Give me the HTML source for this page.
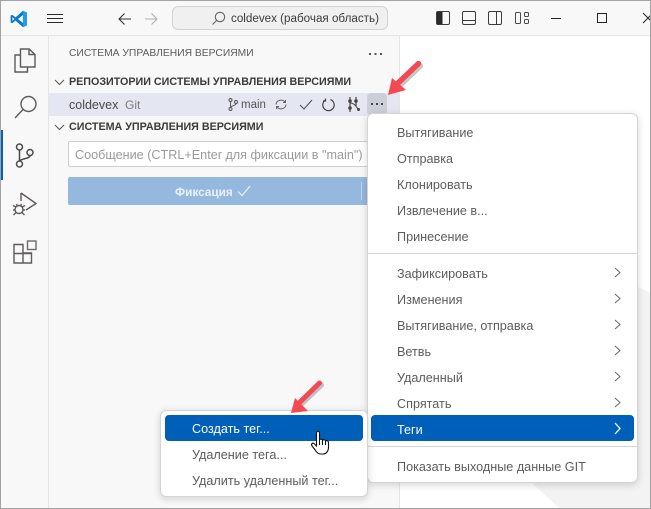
<!DOCTYPE html>
<html><head><meta charset="utf-8"><style>
html,body{margin:0;padding:0;background:#fff}
body{width:651px;height:509px;position:relative;overflow:hidden;font-family:"Liberation Sans","Noto Sans CJK SC",sans-serif;font-size:12.6px;color:#616161}
.a{position:absolute;white-space:nowrap}
svg{position:absolute;overflow:visible}
.mi{position:absolute;left:397px;white-space:nowrap;line-height:16px;font-size:12.63px;color:#5c5c5c}
.h{font-weight:bold;font-size:10.73px;color:#3b3b3b;line-height:14px}
.hl{position:absolute;background:#005fb8;border-radius:4px}
</style></head><body>
<!-- backgrounds -->
<div class="a" style="left:0;top:0;width:651px;height:36px;background:#f8f8f8;border-bottom:1px solid #e5e5e5;box-sizing:border-box"></div>
<div class="a" style="left:0;top:36px;width:49px;height:473px;background:#f8f8f8;border-right:1px solid #e5e5e5;box-sizing:border-box"></div>
<div class="a" style="left:49px;top:36px;width:351px;height:473px;background:#f8f8f8;border-right:1px solid #e5e5e5;box-sizing:border-box"></div>
<svg style="left:400px;top:36px" width="251" height="473"><polygon points="238,251 251,257 251,473 160,473 132,447 190,300" fill="#f3f3f3"/></svg>

<!-- title bar -->
<svg style="left:10px;top:10px" width="18" height="18" viewBox="0 0 18 18"><path d="M13 0.8 L17 2.6 V15.4 L13 17.2 L5.5 10.6 L2.2 13.2 L0.6 12.4 V5.6 L2.2 4.8 L5.5 7.4 Z M13 5 L8 9 L13 13 Z M2.4 7 V11 L4.4 9 Z" fill="#0a7bcc" fill-rule="evenodd"/><path d="M13 0.8 L17 2.6 V15.4 L13 17.2 V13 V5Z" fill="#1f9cf0"/></svg>
<svg style="left:47px;top:14px" width="16" height="10"><path d="M0 .5H16M0 4.5H16M0 8.5H16" stroke="#2a2a2a" stroke-width="1"/></svg>
<svg style="left:118px;top:12px" width="14" height="14" fill="none" stroke="#333" stroke-width="1.1"><path d="M13 7H1M6.500 1.500L1 7L6.500 12.500"/></svg>
<svg style="left:144px;top:12px" width="14" height="14" fill="none" stroke="#b0b0b0" stroke-width="1.1"><path d="M1 7H13M7.500 1.500L13 7L7.500 12.500"/></svg>
<div class="a" style="left:172px;top:6px;width:216px;height:24px;background:#f0f0f0;border:1px solid #d2d2d2;border-radius:6px;box-sizing:border-box"></div>
<svg style="left:212px;top:12px" width="14" height="14" fill="none" stroke="#666" stroke-width="1.1"><circle cx="8" cy="5" r="4.700"/><path d="M4.500 8.500L.5 12.500"/></svg>
<div class="a" style="left:231px;top:11px;font-size:11.65px;color:#3b3b3b;line-height:16px">coldevex (рабочая область)</div>
<svg style="left:436px;top:11px" width="14" height="14" fill="none" stroke="#3b3b3b"><rect x=".5" y=".5" width="13" height="13" rx="1.500"/><rect x="1" y="1" width="5.500" height="12" fill="#2a2a2a" stroke="none"/></svg>
<svg style="left:462px;top:11px" width="14" height="14" fill="none" stroke="#3b3b3b"><rect x=".5" y=".5" width="13" height="13" rx="1.500"/><path d="M1 9.500H13"/></svg>
<svg style="left:488px;top:11px" width="14" height="14" fill="none" stroke="#3b3b3b"><rect x=".5" y=".5" width="13" height="13" rx="1.500"/><path d="M8.500 1V13"/></svg>
<svg style="left:515px;top:11px" width="14" height="14" fill="none" stroke="#4a4a4a"><rect x=".5" y="1.500" width="5" height="11" rx="1"/><rect x="9.500" y="1.500" width="4" height="4" rx="1"/><rect x="9.500" y="8.500" width="4" height="4" rx="1"/></svg>
<svg style="left:551px;top:18px" width="10" height="1"><path d="M0 .5H10" stroke="#222"/></svg>
<svg style="left:597px;top:13px" width="10" height="10" fill="none" stroke="#222"><rect x=".5" y=".5" width="9" height="9"/></svg>
<svg style="left:643px;top:13px" width="10" height="10" fill="none" stroke="#222"><path d="M0 0L10 10M0 10L10 0"/></svg>

<!-- activity bar -->
<div class="a" style="left:1px;top:130px;width:2px;height:50px;background:#005fb8"></div>
<svg style="left:13px;top:47px" width="24" height="26" fill="none" stroke="#5f5a5a" stroke-width="1.400"><path d="M7.500 2H16L22 7.500V20H7.500Z"/><path d="M16 2V7.500H22"/><path d="M7.500 8H2V25H14.500V20"/></svg>
<svg style="left:14px;top:95px" width="24" height="24" fill="none" stroke="#5f5a5a" stroke-width="1.400"><circle cx="14.500" cy="9" r="7.500"/><path d="M9 14.500L1 23"/></svg>
<svg style="left:15px;top:143px" width="20" height="26" fill="none" stroke="#4a4a4a" stroke-width="1.500"><circle cx="4.500" cy="4" r="3"/><circle cx="4.500" cy="21" r="3"/><circle cx="15" cy="9.500" r="3"/><path d="M4.500 7V18M15 12.500C15 16 7 15 4.500 18"/></svg>
<svg style="left:12px;top:191px" width="26" height="28" fill="none" stroke="#5f5a5a" stroke-width="1.400"><path d="M9 2L24 12.500L14 19M9 2V10"/><circle cx="7" cy="18.500" r="4"/><path d="M1 14.500L4 16M13 14.500L10 16M1 19H3M13 19H11M1.500 24L4 21.500M12.500 24L10 21.500M4.500 13L5.500 15M9.500 13L8.500 15"/></svg>
<svg style="left:13px;top:240px" width="25" height="25" fill="none" stroke="#5f5a5a" stroke-width="1.400"><path d="M1 4.500H10V13H18.500V23H1ZM1 13.500H18.500M10 13V23"/><rect x="14.500" y="1" width="8.500" height="8.500" stroke="#6c6c6c"/></svg>

<!-- sidebar -->
<div class="a" style="left:69px;top:47px;font-size:10.3px;line-height:14px;color:#5a5a5a">СИСТЕМА УПРАВЛЕНИЯ ВЕРСИЯМИ</div>
<svg style="left:369px;top:53px" width="14" height="3" fill="#555"><rect x="0" y="0" width="2" height="2"/><rect x="5.500" y="0" width="2" height="2"/><rect x="11" y="0" width="2" height="2"/></svg>
<svg style="left:54px;top:79px" width="11" height="7" fill="none" stroke="#555"><path d="M1 1L5.500 5.500L10 1"/></svg>
<div class="a h" style="left:69px;top:75px">РЕПОЗИТОРИИ СИСТЕМЫ УПРАВЛЕНИЯ ВЕРСИЯМИ</div>
<div class="a" style="left:49px;top:93px;width:350px;height:23px;background:#e4e6f1"></div>
<div class="a" style="left:69px;top:97px;font-size:12.5px;line-height:16px;color:#4a4a4a">coldevex</div>
<div class="a" style="left:125px;top:97px;font-size:12px;line-height:16px;color:#7c7c7c">Git</div>
<svg style="left:228px;top:98px" width="10" height="13" fill="none" stroke="#555"><circle cx="2.500" cy="2" r="1.500"/><circle cx="2.500" cy="11" r="1.500"/><circle cx="8" cy="4" r="1.500"/><path d="M2.500 3.500V9.500M8 5.500C8 8 4 7 2.500 9.500"/></svg>
<div class="a" style="left:241px;top:97px;font-size:11.500px;line-height:16px;color:#555">main</div>
<svg style="left:275px;top:99px" width="12" height="11" fill="none" stroke="#666"><path d="M1 5.500A5 4.500 0 0 1 10 3M11 5.500A5 4.500 0 0 1 2 8M10.500 1V3.500H8M1.500 10V7.500H4"/></svg>
<svg style="left:299px;top:99px" width="14" height="11" fill="none" stroke="#555" stroke-width="1.100"><path d="M1 6L5 10L13 1"/></svg>
<svg style="left:322px;top:98px" width="13" height="13" fill="none" stroke="#444" stroke-width="1.200"><path d="M4 1.800A5.700 5.700 0 1 0 8.500 1.600M3.500 .5V3H1"/></svg>
<svg style="left:346px;top:97px" width="14" height="15" fill="#444" stroke="#444"><path d="M4 0V15M10 0V9" fill="none" stroke-width="1.200"/><path d="M4 6C9 6 10 10 13 13" fill="none"/><circle cx="4" cy="4" r="1.300"/><circle cx="10" cy="4" r="1.300"/><circle cx="4" cy="11" r="1.300"/><circle cx="12.500" cy="12.500" r="1"/></svg>
<div class="a" style="left:367px;top:93px;width:20px;height:22px;background:#ccced8;border-radius:4px"></div>
<svg style="left:371px;top:103px" width="13" height="3" fill="#444"><rect x="0" y="0" width="2" height="2"/><rect x="5" y="0" width="2" height="2"/><rect x="10" y="0" width="2" height="2"/></svg>
<svg style="left:54px;top:124px" width="11" height="7" fill="none" stroke="#555"><path d="M1 1L5.500 5.500L10 1"/></svg>
<div class="a h" style="left:69px;top:120px">СИСТЕМА УПРАВЛЕНИЯ ВЕРСИЯМИ</div>
<div class="a" style="left:68px;top:141px;width:300px;height:26px;background:#fff;border:1px solid #cecece;border-radius:2px;box-sizing:border-box"></div>
<div class="a" style="left:75px;top:147px;font-size:12.63px;line-height:16px;color:#9a9a9a">Сообщение (CTRL+Enter для фиксации в "main")</div>
<div class="a" style="left:68px;top:177px;width:300px;height:28px;background:#94b8de;border-radius:2px"></div>
<div class="a" style="left:175px;top:184px;font-size:11.8px;font-weight:bold;line-height:16px;color:#eaf1f8">Фиксация</div>
<svg style="left:237px;top:185px" width="14" height="12" fill="none" stroke="#eaf1f8" stroke-width="1.200"><path d="M1 6.500L5 10.500L13 1"/></svg>
<div class="a" style="left:361px;top:182px;width:1px;height:18px;background:#c5d7ea"></div>

<!-- main menu -->
<div class="a" style="left:367px;top:113px;width:271px;height:370px;background:#fff;border:1px solid #d4d4d4;border-radius:6px;box-sizing:border-box;box-shadow:0 2px 8px rgba(0,0,0,.16)"></div>
<div class="mi" style="top:125px">Вытягивание</div>
<div class="mi" style="top:151px">Отправка</div>
<div class="mi" style="top:177px">Клонировать</div>
<div class="mi" style="top:203px">Извлечение в...</div>
<div class="mi" style="top:229px">Принесение</div>
<div class="a" style="left:368px;top:253px;width:269px;height:1px;background:#d4d4d4"></div>
<div class="mi" style="top:266px">Зафиксировать</div>
<div class="mi" style="top:292px">Изменения</div>
<div class="mi" style="top:318px">Вытягивание, отправка</div>
<div class="mi" style="top:344px">Ветвь</div>
<div class="mi" style="top:370px">Удаленный</div>
<div class="mi" style="top:396px">Спрятать</div>
<div class="hl" style="left:371px;top:415px;width:263px;height:26px"></div>
<div class="mi" style="top:422px;color:#fff">Теги</div>
<svg style="left:614px;top:267px" width="8" height="156" fill="none" stroke="#666"><path d="M1 1L6 5.500L1 10M1 27L6 31.500L1 36M1 53L6 57.500L1 62M1 79L6 83.500L1 88M1 105L6 109.500L1 114M1 131L6 135.500L1 140"/><path d="M1 156L6 161.500L1 167" stroke="#fff" stroke-width="1.300"/></svg>
<div class="a" style="left:368px;top:446px;width:269px;height:1px;background:#d4d4d4"></div>
<div class="mi" style="top:459px">Показать выходные данные GIT</div>

<!-- submenu -->
<div class="a" style="left:160px;top:410px;width:208px;height:87px;background:#fff;border:1px solid #d4d4d4;border-radius:6px;box-sizing:border-box;box-shadow:0 2px 8px rgba(0,0,0,.16)"></div>
<div class="hl" style="left:165px;top:415px;width:198px;height:26px"></div>
<div class="mi" style="left:192px;top:421px;color:#fff">Создать тег...</div>
<div class="mi" style="left:192px;top:447px">Удаление тега...</div>
<div class="mi" style="left:192px;top:473px">Удалить удаленный тег...</div>

<!-- hand cursor -->
<svg style="left:310px;top:430px" width="22" height="26" viewBox="0 0 22 26"><path d="M6.500 3C6.500 .8 9.500 .8 9.500 3V9.500C11 9 12 9.200 12.500 10C14 9.500 15 9.800 15.500 10.700C17 10.300 18.500 11 18.500 12.500V17C18.500 21 16.500 24 13 24H10.500C8 24 7 22.500 5.500 20.500L1.800 15.500C.8 14 2.800 12.500 4 13.500L6.500 16Z" fill="#fff" stroke="#111" stroke-width="1.100"/><path d="M9.500 10V15M12.500 10V15M15.500 11V15" stroke="#111" fill="none"/></svg>

<!-- arrows -->
<svg style="left:380px;top:55px" width="50" height="50" viewBox="0 0 50 50"><path d="M39 9L16 31" stroke="rgba(0,0,0,.22)" stroke-width="6" stroke-linecap="round" transform="translate(1,2)"/><path d="M38.500 8.500L16 30" stroke="#f44952" stroke-width="5.500" stroke-linecap="round" fill="none"/><polygon points="8,40 12,23 26,35" fill="#f44952"/></svg>
<svg style="left:282px;top:375px" width="50" height="50" viewBox="0 0 50 50"><path d="M38 8L17 28" stroke="rgba(0,0,0,.22)" stroke-width="6" stroke-linecap="round" transform="translate(1,2)"/><path d="M37.500 8L17 28" stroke="#f44952" stroke-width="5" stroke-linecap="round" fill="none"/><polygon points="9,38 13,23 26,36" fill="#f44952"/></svg>

<!-- window border -->
<div class="a" style="left:0;top:0;width:651px;height:1px;background:#a3a3a3"></div>
<div class="a" style="left:0;top:0;width:1px;height:509px;background:#a3a3a3"></div>
<div class="a" style="left:650px;top:0;width:1px;height:509px;background:#a3a3a3"></div>
<div class="a" style="left:0;top:508px;width:651px;height:1px;background:#a3a3a3"></div>
</body></html>
